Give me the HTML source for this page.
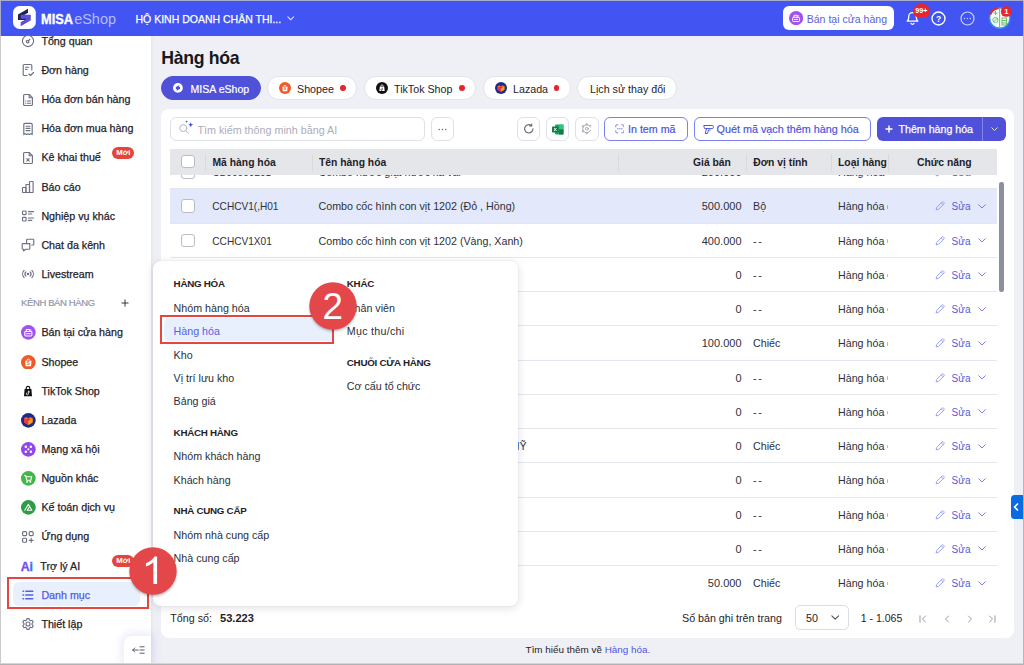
<!DOCTYPE html>
<html><head><meta charset="utf-8">
<style>
*{box-sizing:border-box;margin:0;padding:0}
html,body{width:1024px;height:665px;overflow:hidden;background:#eff0f5;font-family:"Liberation Sans",sans-serif;color:#1f2229;font-size:10.7px}
.abs,.abs *{position:absolute}
div,span,svg{position:absolute;white-space:nowrap}
#hdr{left:0;top:0;width:1024px;height:36px;background:#4255f3}
#side{left:0;top:36px;width:151px;height:629px;background:#fff;box-shadow:1px 0 3px rgba(0,0,0,.05)}
.si{left:41px;font-size:10.7px;color:#1f2229;height:14px;line-height:14px;-webkit-text-stroke:.25px #1f2229}
.pill{top:76px;height:24px;border-radius:12px;background:#fff;border:1px solid #e3e4ea;font-size:10.7px;line-height:22px}
#card{left:161px;top:108.5px;width:853px;height:529px;background:#fff;border-radius:8px}
.btn{top:117px;height:23.5px;border:1px solid #e0e1e8;border-radius:6px;background:#fff}
#th{left:170px;top:149px;width:827px;height:26px;background:#e5e6ea}
.th{top:0;height:26px;line-height:27.4px;font-weight:700;font-size:10.35px;color:#1f2229}
.sep{top:4.5px;width:1px;height:17px;background:#d9dade}
.row{left:170px;width:827px;height:34.25px;border-bottom:1px solid #e3e6ee}
.row span{top:0;height:34.25px;line-height:34.25px;font-size:10.7px;color:#2e3139}
.cb{width:13px;height:13px;border:1px solid #b9bcc6;border-radius:3px;background:#fff}
</style></head><body>
<div id="hdr">
<svg style="left:12.600px;top:5.900px" width="23.4" height="23.2" viewBox="0 0 23.4 23.2"><rect x="0" y="0" width="22.800" height="23" rx="6.500" fill="#fff"/><g transform="translate(11.400,11.500) scale(1.220) translate(-11.750,-11.650)"><path d="M6.5 9.2l8.2-4.7v3.3L9.8 10.6l4.9 0v3.2L6.5 13.800z" fill="#1e2452"/><path d="M17 9.4v4.600l-8.300 4.800v-3.300l4.900-2.800h-4.900l0-3.300z" fill="#5b50d6"/></g></svg>
<svg style="left:40px;top:8px" width="80" height="22" viewBox="0 0 80 22"><text x="1" y="15.8" font-family="Liberation Sans" font-weight="700" font-size="14.6" fill="#fff" stroke="#fff" stroke-width=".35" textLength="32" lengthAdjust="spacingAndGlyphs">MISA</text><text x="34.2" y="15.8" font-family="Liberation Sans" font-size="14.5" fill="#b6bdf9" textLength="41.8" lengthAdjust="spacingAndGlyphs">eShop</text></svg>
<div style="left:135.5px;top:12px;height:14px;line-height:14px;font-size:10.5px;color:#fff;-webkit-text-stroke:.25px #fff">HỘ KINH DOANH CHÂN THI...</div>
<svg style="left:287px;top:16.300px" width="7.500" height="5" viewBox="0 0 9 6" fill="none" stroke="#d5d9fc" stroke-width="1.300" stroke-linecap="round" stroke-linejoin="round"><path d="M1 1l3.500 3.500L8 1"/></svg>
<div style="left:783px;top:6px;width:110.5px;height:24px;border-radius:6px;background:#fff"></div>
<svg style="left:789.100px;top:10.800px" width="14.200" height="14.200" viewBox="0 0 14 14"><circle cx="7" cy="7" r="7" fill="#a052f0"/><g fill="none" stroke="#fff" stroke-width=".9" stroke-linecap="round" stroke-linejoin="round"><rect x="3.6" y="6.2" width="6.8" height="4.2" rx=".8"/><path d="M5 6.2V4.2h3v2M5.2 8.3h3.6M8.6 4.8h1"/></g></svg>
<div style="left:806.7px;top:12.2px;height:14px;line-height:14px;font-size:10.55px;color:#5a5fd8">Bán tại cửa hàng</div>
<svg style="left:904.5px;top:9.600px" width="15" height="15" viewBox="0 0 15 15" fill="none" stroke="#fff" stroke-width="1.3" stroke-linecap="round" stroke-linejoin="round"><path d="M2.2 11.2c1-.9 1.500-2 1.500-3.600V6.500a3.800 3.800 0 0 1 7.600 0v1.100c0 1.600.5 2.700 1.500 3.600z"/><path d="M6 13.300a1.600 1.600 0 0 0 3 0"/></svg>
<div style="left:912.5px;top:4px;width:17.5px;height:14px;border-radius:7px;background:#e8252d;color:#fff;font-size:7.2px;font-weight:700;line-height:14px;text-align:center">99+</div>
<svg style="left:931.4px;top:10.600px" width="15" height="15" viewBox="0 0 15 15"><circle cx="7.5" cy="7.5" r="6.5" fill="none" stroke="#fff" stroke-width="1.400"/><text x="7.500" y="10.600" font-family="Liberation Sans" font-weight="700" font-size="8.500" fill="#fff" text-anchor="middle">?</text></svg>
<svg style="left:960.3px;top:10.600px" width="15" height="15" viewBox="0 0 15 15"><circle cx="7.5" cy="7.5" r="6.5" fill="none" stroke="#cdd2fb" stroke-width="1.200"/><g fill="#cdd2fb"><circle cx="4.600" cy="7.500" r=".7"/><circle cx="7.5" cy="7.5" r=".7"/><circle cx="10.400" cy="7.500" r=".7"/></g></svg>
<svg style="left:987px;top:3.500px" width="28" height="28" viewBox="0 0 28 28"><defs><clipPath id="avc"><circle cx="12.750" cy="14.100" r="10"/></clipPath></defs><circle cx="12.750" cy="14.100" r="10.200" fill="#f3f9f3" stroke="#3d8ef0" stroke-width="1.400"/><g clip-path="url(#avc)" fill="none" stroke="#62b866" stroke-width=".9"><path d="M12.600 4v20"/><circle cx="8.400" cy="16" r="2.600"/><path d="M6.800 17.500l3.200-3"/><path d="M6.500 9h4M8.500 7v4"/><path d="M15 11.500h5M15 9h5"/><rect x="15" y="14" width="4.500" height="7" /><path d="M15 16.500h4.500M15 19h4.500"/></g><path d="M3.300 10.500A10.200 10.200 0 0 1 11.500 4" stroke="#e8252d" stroke-width="2" fill="none"/><circle cx="19.300" cy="7.400" r="5.400" fill="#e8252d"/><text x="19.300" y="10.200" font-family="Liberation Sans" font-weight="700" font-size="7.800" fill="#fff" text-anchor="middle">1</text></svg>
</div>
<div id="side">
<div style="left:12.5px;top:546px;width:127px;height:24px;border-radius:6px;background:#e9f0fd"></div>
<div style="left:21.3px;top:-1.75px;width:14px;height:14px"><svg width="14" height="14" viewBox="0 0 14 14" fill="none" stroke="#6c7184" stroke-width="1.150" stroke-linecap="round" stroke-linejoin="round"><circle cx="7" cy="7" r="5.6"/><circle cx="6.6" cy="7.6" r="1.3"/><path d="M7.6 6.6L9 5.2"/></svg></div>
<div class="si" style="left:41.4px;top:-2.15px;color:#1f2229;-webkit-text-stroke-color:#1f2229">Tổng quan</div>
<div style="left:21.3px;top:27.40px;width:14px;height:14px"><svg width="14" height="14" viewBox="0 0 14 14" fill="none" stroke="#6c7184" stroke-width="1.150" stroke-linecap="round" stroke-linejoin="round"><path d="M6 12.5H3.2a1 1 0 0 1-1-1V2.5a1 1 0 0 1 1-1h6.6a1 1 0 0 1 1 1V7"/><path d="M4.6 4.2h3M4.6 6.4h1.4"/><path d="M8 11l1.5 1.5 3-3"/></svg></div>
<div class="si" style="left:41.4px;top:27.00px;color:#1f2229;-webkit-text-stroke-color:#1f2229">Đơn hàng</div>
<div style="left:21.3px;top:56.55px;width:14px;height:14px"><svg width="14" height="14" viewBox="0 0 14 14" fill="none" stroke="#6c7184" stroke-width="1.150" stroke-linecap="round" stroke-linejoin="round"><path d="M8.2 1.5H3.6a1 1 0 0 0-1 1v9a1 1 0 0 0 1 1h6.8a1 1 0 0 0 1-1V4.7z"/><path d="M8.2 1.5v3.2h3.2"/><path d="M6.5 8h3M6.5 10.2h3M4.7 8h.1M4.7 10.2h.1"/></svg></div>
<div class="si" style="left:41.4px;top:56.15px;color:#1f2229;-webkit-text-stroke-color:#1f2229">Hóa đơn bán hàng</div>
<div style="left:21.3px;top:85.70px;width:14px;height:14px"><svg width="14" height="14" viewBox="0 0 14 14" fill="none" stroke="#6c7184" stroke-width="1.150" stroke-linecap="round" stroke-linejoin="round"><path d="M2.8 12.6V2.4a1 1 0 0 1 1-1h6.4a1 1 0 0 1 1 1v10.2l-1.4-.9-1.4.9-1.4-.9-1.4.9-1.4-.9z"/><path d="M5 4.2h4M5 6.4h4M5 8.6h4"/></svg></div>
<div class="si" style="left:41.4px;top:85.30px;color:#1f2229;-webkit-text-stroke-color:#1f2229">Hóa đơn mua hàng</div>
<div style="left:21.3px;top:114.85px;width:14px;height:14px"><svg width="14" height="14" viewBox="0 0 14 14" fill="none" stroke="#6c7184" stroke-width="1.150" stroke-linecap="round" stroke-linejoin="round"><path d="M8.2 1.5H3.6a1 1 0 0 0-1 1v9a1 1 0 0 0 1 1h6.8a1 1 0 0 0 1-1V4.7z"/><path d="M8.2 1.5v3.2h3.2"/><path d="M5.8 7.6l2.4 2.6M8.2 7.6l-2.4 2.6"/></svg></div>
<div class="si" style="left:41.4px;top:114.45px;color:#1f2229;-webkit-text-stroke-color:#1f2229">Kê khai thuế</div>
<div style="left:21.3px;top:144.00px;width:14px;height:14px"><svg width="14" height="14" viewBox="0 0 14 14" fill="none" stroke="#6c7184" stroke-width="1.150" stroke-linecap="round" stroke-linejoin="round"><rect x="1.5" y="7.5" width="3.4" height="5" rx=".6"/><rect x="4.9" y="4.5" width="3.6" height="8" rx=".6"/><rect x="8.5" y="1.5" width="3.6" height="11" rx=".6"/></svg></div>
<div class="si" style="left:41.4px;top:143.60px;color:#1f2229;-webkit-text-stroke-color:#1f2229">Báo cáo</div>
<div style="left:21.3px;top:173.15px;width:14px;height:14px"><svg width="14" height="14" viewBox="0 0 14 14" fill="none" stroke="#6c7184" stroke-width="1.150" stroke-linecap="round" stroke-linejoin="round"><rect x="1.5" y="2" width="3.6" height="3.6" rx=".8"/><rect x="1.5" y="8.4" width="3.6" height="3.6" rx=".8"/><path d="M7.4 2.6h5.2M7.4 5h3.4M7.4 9h5.2M7.4 11.4h3.4"/></svg></div>
<div class="si" style="left:41.4px;top:172.75px;color:#1f2229;-webkit-text-stroke-color:#1f2229">Nghiệp vụ khác</div>
<div style="left:21.3px;top:202.30px;width:14px;height:14px"><svg width="14" height="14" viewBox="0 0 14 14" fill="none" stroke="#6c7184" stroke-width="1.150" stroke-linecap="round" stroke-linejoin="round"><path d="M5.600 4.600V2a.8.8 0 0 1 .8-.8h5.600a.8.8 0 0 1 .8.800v4.200a.8.8 0 0 1-.8.800h-1.200"/><path d="M8.800 5.600H2a.8.8 0 0 0-.8.800v4a.8.800 0 0 0 .8.800h.6v1.800L4.800 11.200H8a.8.800 0 0 0 .8-.8z"/></svg></div>
<div class="si" style="left:41.4px;top:201.90px;color:#1f2229;-webkit-text-stroke-color:#1f2229">Chat đa kênh</div>
<div style="left:21.3px;top:231.45px;width:14px;height:14px"><svg width="14" height="14" viewBox="0 0 14 14" fill="none" stroke="#6c7184" stroke-width="1.150" stroke-linecap="round" stroke-linejoin="round"><circle cx="7" cy="7" r=".7" fill="#6c7184"/><path d="M4.9 4.9a3 3 0 0 0 0 4.2M9.1 4.9a3 3 0 0 1 0 4.2M3.1 3.4a5.2 5.2 0 0 0 0 7.2M10.9 3.4a5.2 5.2 0 0 1 0 7.2"/></svg></div>
<div class="si" style="left:41.4px;top:231.05px;color:#1f2229;-webkit-text-stroke-color:#1f2229">Livestream</div>
<div style="left:21px;top:260.80px;height:12px;line-height:12px;font-size:9.5px;letter-spacing:-.38px;color:#9296a8;-webkit-text-stroke:.2px #9296a8">KÊNH BÁN HÀNG</div>
<svg style="left:121px;top:262.90px" width="8" height="8" viewBox="0 0 8 8" stroke="#33363f" stroke-width="1" fill="none"><path d="M4 .5v7M.5 4h7"/></svg>
<div style="left:21.3px;top:289.75px;width:14px;height:14px"><svg style="left:-.4px;top:-.3px" width="14.700" height="14.700" viewBox="0 0 14 14"><circle cx="7" cy="7" r="7" fill="#a052f0"/><g fill="none" stroke="#fff" stroke-width="1" stroke-linecap="round" stroke-linejoin="round" stroke-width=".9"><rect x="3.6" y="6.2" width="6.8" height="4.2" rx=".8"/><path d="M5 6.2V4.2h3v2M5.2 8.3h3.6M8.6 4.8h1"/></g></svg></div>
<div class="si" style="left:41.4px;top:289.35px;color:#1f2229;-webkit-text-stroke-color:#1f2229">Bán tại cửa hàng</div>
<div style="left:21.3px;top:318.90px;width:14px;height:14px"><svg style="left:-.4px;top:-.3px" width="14.700" height="14.700" viewBox="0 0 14 14"><circle cx="7" cy="7" r="7" fill="#f05a28"/><path d="M4 5.4h6l-.4 5.4H4.4z" fill="#fff"/><path d="M5.6 5.4a1.4 1.6 0 0 1 2.8 0" fill="none" stroke="#fff" stroke-width=".8"/><text x="7" y="9.8" font-size="4.5" font-weight="700" fill="#f05a28" text-anchor="middle" font-family="Liberation Sans">S</text></svg></div>
<div class="si" style="left:41.4px;top:318.50px;color:#1f2229;-webkit-text-stroke-color:#1f2229">Shopee</div>
<div style="left:21.3px;top:348.05px;width:14px;height:14px"><svg width="14" height="14" viewBox="0 0 14 14"><path d="M3.6 5h6.8l.6 7.2H3z" fill="#111"/><path d="M5.2 5.4V4.2a1.8 1.8 0 0 1 3.6 0v1.2" fill="none" stroke="#111" stroke-width="1.1"/><path d="M7.4 6.8v3a1 1 0 1 1-1-1M7.4 6.8c.2.8.7 1.2 1.4 1.3" fill="none" stroke="#fff" stroke-width=".8"/></svg></div>
<div class="si" style="left:41.4px;top:347.65px;color:#1f2229;-webkit-text-stroke-color:#1f2229">TikTok Shop</div>
<div style="left:21.3px;top:377.20px;width:14px;height:14px"><svg style="left:-.4px;top:-.3px" width="14.700" height="14.700" viewBox="0 0 14 14"><circle cx="7" cy="7" r="7" fill="#1e2a8a"/><path d="M7 11.4L3 9V5l2-1.2 2 1.2 2-1.2L11 5v4z" fill="#f36d21"/><path d="M7 11.4V7.2L3 5v4z" fill="#e8374a"/><path d="M7 11.4V7.2L11 5v4z" fill="#f7a01e"/><path d="M5.6 6.2L7 7.2l1.4-1L7 5.2z" fill="#c2185b"/></svg></div>
<div class="si" style="left:41.4px;top:376.80px;color:#1f2229;-webkit-text-stroke-color:#1f2229">Lazada</div>
<div style="left:21.3px;top:406.35px;width:14px;height:14px"><svg style="left:-.4px;top:-.3px" width="14.700" height="14.700" viewBox="0 0 14 14"><circle cx="7" cy="7" r="7" fill="#9346ec"/><g fill="#fff"><circle cx="4.6" cy="4.6" r="1.2"/><circle cx="9.4" cy="4.6" r="1.2"/><circle cx="4.6" cy="9.4" r="1.2"/><circle cx="9.4" cy="9.4" r="1.2"/><circle cx="7" cy="7" r="1"/></g></svg></div>
<div class="si" style="left:41.4px;top:405.95px;color:#1f2229;-webkit-text-stroke-color:#1f2229">Mạng xã hội</div>
<div style="left:21.3px;top:435.50px;width:14px;height:14px"><svg style="left:-.4px;top:-.3px" width="14.700" height="14.700" viewBox="0 0 14 14"><circle cx="7" cy="7" r="7" fill="#43b549"/><g fill="none" stroke="#fff" stroke-width="1" stroke-linecap="round" stroke-linejoin="round" stroke-width=".9"><path d="M3.4 4.2h1l1 4.6h4l.9-3.4H4.9"/><circle cx="5.9" cy="10.3" r=".5"/><circle cx="8.9" cy="10.3" r=".5"/></g></svg></div>
<div class="si" style="left:41.4px;top:435.10px;color:#1f2229;-webkit-text-stroke-color:#1f2229">Nguồn khác</div>
<div style="left:21.3px;top:464.65px;width:14px;height:14px"><svg style="left:-.4px;top:-.3px" width="14.700" height="14.700" viewBox="0 0 14 14"><circle cx="7" cy="7" r="7" fill="#2e9b47"/><g fill="none" stroke="#fff" stroke-width="1" stroke-linecap="round" stroke-linejoin="round" stroke-width="1.1"><path d="M3.6 9.8L7 4l1.4 2.4M6 9.8l2.2-3.6 2.2 3.6z"/></g></svg></div>
<div class="si" style="left:41.4px;top:464.25px;color:#1f2229;-webkit-text-stroke-color:#1f2229">Kế toán dịch vụ</div>
<div style="left:21.3px;top:493.80px;width:14px;height:14px"><svg width="14" height="14" viewBox="0 0 14 14" fill="none" stroke="#6c7184" stroke-width="1.150" stroke-linecap="round" stroke-linejoin="round"><rect x="1.6" y="1.6" width="4" height="4" rx="1"/><rect x="8.2" y="1.6" width="4" height="4" rx="1"/><rect x="1.6" y="8.2" width="4" height="4" rx="1"/><path d="M10.2 8.4v3.8M8.3 10.3h3.8"/></svg></div>
<div class="si" style="left:41.4px;top:493.40px;color:#1f2229;-webkit-text-stroke-color:#1f2229">Ứng dụng</div>
<div style="left:21.3px;top:522.95px;width:14px;height:14px"><svg width="14" height="14" viewBox="0 0 14 14"><defs><linearGradient id="aig" x1="0" x2="1"><stop offset="0" stop-color="#8a3ff0"/><stop offset="1" stop-color="#3f6cf0"/></linearGradient></defs><text x="-0.3" y="11.6" font-size="12.3" font-weight="700" fill="url(#aig)" stroke="url(#aig)" stroke-width=".3" font-family="Liberation Sans">Ai</text></svg></div>
<div class="si" style="left:40.3px;top:522.55px;color:#1f2229;-webkit-text-stroke-color:#1f2229">Trợ lý AI</div>
<div style="left:21.3px;top:552.10px;width:14px;height:14px"><svg width="14" height="14" viewBox="0 0 14 14" fill="none" stroke="#555ee6" stroke-width="1.400" stroke-linecap="round" stroke-linejoin="round"><path d="M4.8 3.2h7M4.8 7h7M4.8 10.8h7M2 3.2h.6M2 7h.6M2 10.8h.6"/></svg></div>
<div class="si" style="left:41.4px;top:551.70px;color:#525be3;-webkit-text-stroke-color:#525be3">Danh mục</div>
<div style="left:21.3px;top:581.25px;width:14px;height:14px"><svg width="14" height="14" viewBox="0 0 14 14" fill="none" stroke="#6c7184" stroke-width="1.150" stroke-linecap="round" stroke-linejoin="round"><circle cx="7" cy="7" r="2"/><path d="M5.9 1.6h2.2l.4 1.5 1.1.6 1.5-.4 1.1 1.9-1.1 1.1v1.4l1.1 1.1-1.1 1.9-1.5-.4-1.1.6-.4 1.5H5.9l-.4-1.5-1.1-.6-1.5.4-1.1-1.9 1.1-1.1V6.300l-1.1-1.1 1.1-1.9 1.5.4 1.1-.6z"/></svg></div>
<div class="si" style="left:41.4px;top:580.85px;color:#1f2229;-webkit-text-stroke-color:#1f2229">Thiết lập</div>
<div style="left:112.2px;top:111.0px;width:22.2px;height:12px;border-radius:6px;background:#e5443b;color:#fff;font-size:7.8px;font-weight:700;line-height:12px;text-align:center">Mới</div>
<div style="left:112.2px;top:518.6px;width:22.2px;height:12px;border-radius:6px;background:#e5443b;color:#fff;font-size:7.8px;font-weight:700;line-height:12px;text-align:center">Mới</div>
<div style="left:124px;top:600px;width:27px;height:29px;background:#fff;border-radius:8px 0 0 0;box-shadow:0 0 8px 3px rgba(90,100,210,.13)"></div>
<svg style="left:131.5px;top:608.5px" width="13" height="10" viewBox="0 0 13 10" fill="none" stroke="#5a5f6e" stroke-width="1" stroke-linecap="round"><path d="M.8 5h5.4M.8 5l2-2M.8 5l2 2M8 1.8h4.2M8 5h4.2M8 8.200h4.2"/></svg>
</div>
<div style="left:161.2px;top:47.5px;height:20px;line-height:20px;font-size:17.700px;letter-spacing:-.3px;font-weight:700;color:#16181d">Hàng hóa</div>
<div class="pill" style="left:160.5px;width:100px;background:#4f51d9;border-color:#4f51d9;color:#fff;"><svg style="left:11.800px;top:6px" width="9.800" height="9.800" viewBox="0 0 11 11"><circle cx="5.500" cy="5.500" r="5.500" fill="#fff"/><path d="M3.200 4.600L7 2.500v1.500L4.800 5.200h2.200v1.500L3.200 6.700z" fill="#4f51d9"/><path d="M7.900 4.400v2.100L4.100 8.600v-1.500l2.200-1.200H4.100v-1.500z" fill="#4f51d9"/></svg><span style="left:29px;top:.7px;font-size:10.550px;-webkit-text-stroke:.2px #fff">MISA eShop</span></div>
<div class="pill" style="left:267px;width:90px;"><svg style="left:11px;top:5px" width="12" height="12" viewBox="0 0 14 14"><circle cx="7" cy="7" r="7" fill="#f05a28"/><path d="M4 5.400h6l-.4 5.400H4.400z" fill="#fff"/><path d="M5.600 5.400a1.400 1.600 0 0 1 2.800 0" fill="none" stroke="#fff" stroke-width=".8"/><text x="7" y="9.800" font-size="4.500" font-weight="700" fill="#f05a28" text-anchor="middle" font-family="Liberation Sans">S</text></svg><span style="left:29px;top:.7px">Shopee</span><span style="left:72px;top:8px;width:5.6px;height:5.6px;border-radius:3px;background:#e5252b"></span></div>
<div class="pill" style="left:364px;width:112px;"><svg style="left:11px;top:5px" width="12" height="12" viewBox="0 0 14 14"><circle cx="7" cy="7" r="7" fill="#111"/><path d="M4.400 5.600h5.200l.5 5H3.900z" fill="#fff"/><path d="M5.600 5.800V4.800a1.400 1.400 0 0 1 2.800 0v1" fill="none" stroke="#fff" stroke-width=".9"/><path d="M7.300 6.800v2.300a.8.8 0 1 1-.8-.8" fill="none" stroke="#111" stroke-width=".7"/></svg><span style="left:29px;top:.7px">TikTok Shop</span><span style="left:94px;top:8px;width:5.6px;height:5.6px;border-radius:3px;background:#e5252b"></span></div>
<div class="pill" style="left:483px;width:87.5px;"><svg style="left:11px;top:5px" width="12" height="12" viewBox="0 0 14 14"><circle cx="7" cy="7" r="7" fill="#1e2a8a"/><path d="M7 11.400L3 9V5l2-1.200 2 1.200 2-1.200L11 5v4z" fill="#f36d21"/><path d="M7 11.400V7.200L3 5v4z" fill="#e8374a"/><path d="M7 11.400V7.200L11 5v4z" fill="#f7a01e"/><path d="M5.600 6.200L7 7.200l1.400-1L7 5.200z" fill="#c2185b"/></svg><span style="left:29px;top:.7px">Lazada</span><span style="left:69.5px;top:8px;width:5.6px;height:5.6px;border-radius:3px;background:#e5252b"></span></div>
<div class="pill" style="left:577px;width:100px;"><span style="left:12px;top:.7px">Lịch sử thay đổi</span></div>
<div id="card"></div>
<div class="btn" style="left:170px;width:254.5px"></div>
<svg style="left:176px;top:118px" width="20" height="20" viewBox="0 0 20 20" fill="none" stroke="#b3b6c3" stroke-width="1" stroke-linecap="round"><circle cx="7.300" cy="10.100" r="3.500"/><path d="M9.900 12.700l2.700 2.700"/><path d="M14.700 4.300l.7 1.800 1.800.7-1.800.7-.7 1.800-.7-1.800-1.800-.7 1.800-.7z" fill="#4747ea" stroke="none"/><path d="M10.600 2.300l.4 1 .95.350-.95.350-.4 1-.4-1-.95-.35.95-.35z" fill="#4747ea" stroke="none"/></svg>
<div style="left:197.400px;top:122.500px;height:14px;line-height:14px;font-size:10.750px;color:#abaeba">Tìm kiếm thông minh bằng AI</div>
<div class="btn" style="left:430.5px;width:23px"></div><svg style="left:437.5px;top:128px" width="9" height="3" viewBox="0 0 9 3" fill="#6b7080"><circle cx="1.200" cy="1.500" r=".8"/><circle cx="4.500" cy="1.500" r=".8"/><circle cx="7.800" cy="1.500" r=".8"/></svg>
<div class="btn" style="left:517px;width:23px"></div><svg style="left:522.800px;top:123.200px" width="11.600" height="11.600" viewBox="0 0 10 10" fill="none" stroke="#626676" stroke-width=".95" stroke-linecap="round" stroke-linejoin="round"><path d="M8.600 5a3.600 3.600 0 1 1-1.300-2.800"/><path d="M7.500.8v1.700H5.800"/></svg>
<div class="btn" style="left:546px;width:23px"></div><svg style="left:551.500px;top:123.500px" width="12" height="11" viewBox="0 0 12 11"><rect x="3" y=".5" width="8.500" height="10" rx="1" fill="#21a366"/><rect x="7.200" y=".5" width="4.300" height="5" fill="#33c481"/><rect x="7.200" y="5.500" width="4.300" height="5" fill="#107c41"/><rect x="0" y="2.500" width="6.500" height="6" rx=".8" fill="#107c41"/><path d="M2 4l2.500 3M4.500 4L2 7" stroke="#fff" stroke-width=".9"/></svg>
<div class="btn" style="left:575px;width:23.500px"></div><svg style="left:580.800px;top:123.300px" width="11.500" height="11.500" viewBox="0 0 14 14" fill="none" stroke="#9a9eaa" stroke-width="1" stroke-linecap="round" stroke-linejoin="round"><circle cx="7" cy="7" r="1.700"/><path d="M11.600 8.800a4.900 4.900 0 1 1 0-3.600"/><path d="M5.900 2.200l.4-1.300h1.400l.4 1.300M2.500 5l-1.200-.7.700-1.200 1.300.4M2.500 9l-1.200.7.700 1.200 1.300-.4M5.900 11.800l.4 1.300h1.400l.4-1.300M10.600 3.200l1-.8.900 1"/></svg>
<div class="btn" style="left:604px;width:84px;border-color:#7a81ea"></div>
<svg style="left:614.500px;top:124.200px" width="9.600" height="9.600" viewBox="0 0 10 10" fill="none" stroke="#6f77e8" stroke-width=".95" stroke-linecap="round"><path d="M.8 3V1.800a1 1 0 0 1 1-1H3M7 .8h1.200a1 1 0 0 1 1 1V3M9.200 7v1.200a1 1 0 0 1-1 1H7M3 9.200H1.800a1 1 0 0 1-1-1V7M2.500 5h.8M4.600 5h.8M6.700 5h.8"/></svg>
<div style="left:628px;top:122.400px;height:14px;line-height:14px;font-size:10.700px;-webkit-text-stroke:.2px #4b55e0;color:#4b55e0">In tem mã</div>
<div class="btn" style="left:693.500px;width:177.500px;border-color:#7a81ea"></div>
<svg style="left:703px;top:123.500px" width="11" height="11" viewBox="0 0 11 11" fill="none" stroke="#4b55e0" stroke-width="1" stroke-linecap="round" stroke-linejoin="round"><path d="M1.200 1.500h8.300a.8.8 0 0 1 .8.800v1.500a.8.8 0 0 1-.8.800H2a.8.8 0 0 1-.8-.8z"/><path d="M3.500 4.600L2.200 9.500h2.300l1-3.500h1.500"/></svg>
<div style="left:716.500px;top:122.400px;height:14px;line-height:14px;font-size:10.800px;-webkit-text-stroke:.2px #4b55e0;color:#4b55e0">Quét mã vạch thêm hàng hóa</div>
<div style="left:877px;top:117px;width:129px;height:23.500px;border-radius:6px;background:#4f51d9"></div>
<div style="left:982px;top:117px;width:1px;height:23.500px;background:#7f85e6"></div>
<svg style="left:884.500px;top:125px" width="8" height="8" viewBox="0 0 8 8" stroke="#fff" stroke-width="1.450" fill="none"><path d="M4 .5v7M.5 4h7"/></svg>
<div style="left:898.500px;top:122px;height:14px;line-height:14px;font-size:10.650px;color:#fff;-webkit-text-stroke:.25px #fff">Thêm hàng hóa</div>
<svg style="left:990.500px;top:127px" width="7" height="5" viewBox="0 0 7 5" fill="none" stroke="#dfe2fc" stroke-width="1" stroke-linecap="round" stroke-linejoin="round"><path d="M.8.8l2.700 2.700L6.200.8"/></svg>
<div style="left:170px;top:175px;width:827px;height:426px;overflow:hidden">
<div class="row" style="left:0;top:-19.80px;height:34.250px;">
<span class="cb" style="left:11px;top:10px;width:13.500px;height:13.500px"></span>
<span style="left:42.300px;top:1px;font-size:10.100px">CB00000201</span><span style="left:148.500px">Combo nước giặt nước xả vải</span>
<span style="right:255.500px;left:auto;font-size:11px">200.000</span><span style="left:583px"></span>
<span style="left:668px">Hàng hóa</span><span style="left:716.800px;top:15.600px;width:1.300px;height:3.600px;border-radius:1px;background:#6d707a;opacity:.5"></span>
<svg style="left:765.300px;top:11.900px" width="10" height="10" viewBox="0 0 9 9" fill="none" stroke="#8f96ec" stroke-width=".8" stroke-linejoin="round"><path d="M1 8l.5-2.200L6.300 1a.9.9 0 0 1 1.300 0l.4.400a.9.9 0 0 1 0 1.300L3.200 7.500z"/><path d="M5.600 1.700l1.700 1.700"/></svg><span style="left:781.600px;top:1px;color:#565cda;font-size:10px">Sửa</span><svg style="left:807.900px;top:14.400px" width="8" height="5" viewBox="0 0 8 5" fill="none" stroke="#6b72e4" stroke-width=".9" stroke-linecap="round" stroke-linejoin="round"><path d="M.7.700l3.300 3.300L7.300.7"/></svg>
</div>
<div class="row" style="left:0;top:14.45px;height:34.250px;background:#e3e9fb;">
<span class="cb" style="left:11px;top:10px;width:13.500px;height:13.500px"></span>
<span style="left:42.300px;top:1px;font-size:10.100px">CCHCV1(,H01</span><span style="left:148.500px">Combo cốc hình con vịt 1202 (Đỏ , Hồng)</span>
<span style="right:255.500px;left:auto;font-size:11px">500.000</span><span style="left:583px">Bộ</span>
<span style="left:668px">Hàng hóa</span><span style="left:716.800px;top:15.600px;width:1.300px;height:3.600px;border-radius:1px;background:#6d707a;opacity:.5"></span>
<svg style="left:765.300px;top:11.900px" width="10" height="10" viewBox="0 0 9 9" fill="none" stroke="#8f96ec" stroke-width=".8" stroke-linejoin="round"><path d="M1 8l.5-2.200L6.300 1a.9.9 0 0 1 1.300 0l.4.400a.9.9 0 0 1 0 1.300L3.200 7.500z"/><path d="M5.600 1.700l1.700 1.700"/></svg><span style="left:781.600px;top:1px;color:#565cda;font-size:10px">Sửa</span><svg style="left:807.900px;top:14.400px" width="8" height="5" viewBox="0 0 8 5" fill="none" stroke="#6b72e4" stroke-width=".9" stroke-linecap="round" stroke-linejoin="round"><path d="M.7.700l3.300 3.300L7.300.7"/></svg>
</div>
<div class="row" style="left:0;top:48.70px;height:34.250px;">
<span class="cb" style="left:11px;top:10px;width:13.500px;height:13.500px"></span>
<span style="left:42.300px;top:1px;font-size:10.100px">CCHCV1X01</span><span style="left:148.500px">Combo cốc hình con vịt 1202 (Vàng, Xanh)</span>
<span style="right:255.500px;left:auto;font-size:11px">400.000</span><span style="left:583px;letter-spacing:1.600px">--</span>
<span style="left:668px">Hàng hóa</span><span style="left:716.800px;top:15.600px;width:1.300px;height:3.600px;border-radius:1px;background:#6d707a;opacity:.5"></span>
<svg style="left:765.300px;top:11.900px" width="10" height="10" viewBox="0 0 9 9" fill="none" stroke="#8f96ec" stroke-width=".8" stroke-linejoin="round"><path d="M1 8l.5-2.200L6.300 1a.9.9 0 0 1 1.300 0l.4.400a.9.9 0 0 1 0 1.300L3.200 7.500z"/><path d="M5.600 1.700l1.700 1.700"/></svg><span style="left:781.600px;top:1px;color:#565cda;font-size:10px">Sửa</span><svg style="left:807.900px;top:14.400px" width="8" height="5" viewBox="0 0 8 5" fill="none" stroke="#6b72e4" stroke-width=".9" stroke-linecap="round" stroke-linejoin="round"><path d="M.7.700l3.300 3.300L7.300.7"/></svg>
</div>
<div class="row" style="left:0;top:82.95px;height:34.250px;">
<span class="cb" style="left:11px;top:10px;width:13.500px;height:13.500px"></span>
<span style="left:42.300px;top:1px;font-size:10.100px"></span><span style="left:148.500px"></span>
<span style="right:255.500px;left:auto;font-size:11px">0</span><span style="left:583px;letter-spacing:1.600px">--</span>
<span style="left:668px">Hàng hóa</span><span style="left:716.800px;top:15.600px;width:1.300px;height:3.600px;border-radius:1px;background:#6d707a;opacity:.5"></span>
<svg style="left:765.300px;top:11.900px" width="10" height="10" viewBox="0 0 9 9" fill="none" stroke="#8f96ec" stroke-width=".8" stroke-linejoin="round"><path d="M1 8l.5-2.200L6.300 1a.9.9 0 0 1 1.300 0l.4.400a.9.9 0 0 1 0 1.300L3.200 7.500z"/><path d="M5.600 1.700l1.700 1.700"/></svg><span style="left:781.600px;top:1px;color:#565cda;font-size:10px">Sửa</span><svg style="left:807.900px;top:14.400px" width="8" height="5" viewBox="0 0 8 5" fill="none" stroke="#6b72e4" stroke-width=".9" stroke-linecap="round" stroke-linejoin="round"><path d="M.7.700l3.300 3.300L7.300.7"/></svg>
</div>
<div class="row" style="left:0;top:117.20px;height:34.250px;">
<span class="cb" style="left:11px;top:10px;width:13.500px;height:13.500px"></span>
<span style="left:42.300px;top:1px;font-size:10.100px"></span><span style="left:148.500px"></span>
<span style="right:255.500px;left:auto;font-size:11px">0</span><span style="left:583px;letter-spacing:1.600px">--</span>
<span style="left:668px">Hàng hóa</span><span style="left:716.800px;top:15.600px;width:1.300px;height:3.600px;border-radius:1px;background:#6d707a;opacity:.5"></span>
<svg style="left:765.300px;top:11.900px" width="10" height="10" viewBox="0 0 9 9" fill="none" stroke="#8f96ec" stroke-width=".8" stroke-linejoin="round"><path d="M1 8l.5-2.200L6.300 1a.9.9 0 0 1 1.300 0l.4.400a.9.9 0 0 1 0 1.300L3.200 7.500z"/><path d="M5.600 1.700l1.700 1.700"/></svg><span style="left:781.600px;top:1px;color:#565cda;font-size:10px">Sửa</span><svg style="left:807.900px;top:14.400px" width="8" height="5" viewBox="0 0 8 5" fill="none" stroke="#6b72e4" stroke-width=".9" stroke-linecap="round" stroke-linejoin="round"><path d="M.7.700l3.300 3.300L7.300.7"/></svg>
</div>
<div class="row" style="left:0;top:151.45px;height:34.250px;">
<span class="cb" style="left:11px;top:10px;width:13.500px;height:13.500px"></span>
<span style="left:42.300px;top:1px;font-size:10.100px"></span><span style="left:148.500px"></span>
<span style="right:255.500px;left:auto;font-size:11px">100.000</span><span style="left:583px">Chiếc</span>
<span style="left:668px">Hàng hóa</span><span style="left:716.800px;top:15.600px;width:1.300px;height:3.600px;border-radius:1px;background:#6d707a;opacity:.5"></span>
<svg style="left:765.300px;top:11.900px" width="10" height="10" viewBox="0 0 9 9" fill="none" stroke="#8f96ec" stroke-width=".8" stroke-linejoin="round"><path d="M1 8l.5-2.200L6.300 1a.9.9 0 0 1 1.300 0l.4.400a.9.9 0 0 1 0 1.300L3.200 7.500z"/><path d="M5.600 1.700l1.700 1.700"/></svg><span style="left:781.600px;top:1px;color:#565cda;font-size:10px">Sửa</span><svg style="left:807.900px;top:14.400px" width="8" height="5" viewBox="0 0 8 5" fill="none" stroke="#6b72e4" stroke-width=".9" stroke-linecap="round" stroke-linejoin="round"><path d="M.7.700l3.300 3.300L7.300.7"/></svg>
</div>
<div class="row" style="left:0;top:185.70px;height:34.250px;">
<span class="cb" style="left:11px;top:10px;width:13.500px;height:13.500px"></span>
<span style="left:42.300px;top:1px;font-size:10.100px"></span><span style="left:148.500px"></span>
<span style="right:255.500px;left:auto;font-size:11px">0</span><span style="left:583px;letter-spacing:1.600px">--</span>
<span style="left:668px">Hàng hóa</span><span style="left:716.800px;top:15.600px;width:1.300px;height:3.600px;border-radius:1px;background:#6d707a;opacity:.5"></span>
<svg style="left:765.300px;top:11.900px" width="10" height="10" viewBox="0 0 9 9" fill="none" stroke="#8f96ec" stroke-width=".8" stroke-linejoin="round"><path d="M1 8l.5-2.200L6.300 1a.9.9 0 0 1 1.300 0l.4.400a.9.9 0 0 1 0 1.300L3.200 7.500z"/><path d="M5.600 1.700l1.700 1.700"/></svg><span style="left:781.600px;top:1px;color:#565cda;font-size:10px">Sửa</span><svg style="left:807.900px;top:14.400px" width="8" height="5" viewBox="0 0 8 5" fill="none" stroke="#6b72e4" stroke-width=".9" stroke-linecap="round" stroke-linejoin="round"><path d="M.7.700l3.300 3.300L7.300.7"/></svg>
</div>
<div class="row" style="left:0;top:219.95px;height:34.250px;">
<span class="cb" style="left:11px;top:10px;width:13.500px;height:13.500px"></span>
<span style="left:42.300px;top:1px;font-size:10.100px"></span><span style="left:148.500px"></span>
<span style="right:255.500px;left:auto;font-size:11px">0</span><span style="left:583px;letter-spacing:1.600px">--</span>
<span style="left:668px">Hàng hóa</span><span style="left:716.800px;top:15.600px;width:1.300px;height:3.600px;border-radius:1px;background:#6d707a;opacity:.5"></span>
<svg style="left:765.300px;top:11.900px" width="10" height="10" viewBox="0 0 9 9" fill="none" stroke="#8f96ec" stroke-width=".8" stroke-linejoin="round"><path d="M1 8l.5-2.200L6.300 1a.9.9 0 0 1 1.300 0l.4.400a.9.9 0 0 1 0 1.300L3.200 7.500z"/><path d="M5.600 1.700l1.700 1.700"/></svg><span style="left:781.600px;top:1px;color:#565cda;font-size:10px">Sửa</span><svg style="left:807.900px;top:14.400px" width="8" height="5" viewBox="0 0 8 5" fill="none" stroke="#6b72e4" stroke-width=".9" stroke-linecap="round" stroke-linejoin="round"><path d="M.7.700l3.300 3.300L7.300.7"/></svg>
</div>
<div class="row" style="left:0;top:254.20px;height:34.250px;">
<span class="cb" style="left:11px;top:10px;width:13.500px;height:13.500px"></span>
<span style="left:340.600px">MỸ</span>
<span style="left:42.300px;top:1px;font-size:10.100px"></span><span style="left:148.500px"></span>
<span style="right:255.500px;left:auto;font-size:11px">0</span><span style="left:583px">Chiếc</span>
<span style="left:668px">Hàng hóa</span><span style="left:716.800px;top:15.600px;width:1.300px;height:3.600px;border-radius:1px;background:#6d707a;opacity:.5"></span>
<svg style="left:765.300px;top:11.900px" width="10" height="10" viewBox="0 0 9 9" fill="none" stroke="#8f96ec" stroke-width=".8" stroke-linejoin="round"><path d="M1 8l.5-2.200L6.300 1a.9.9 0 0 1 1.300 0l.4.400a.9.9 0 0 1 0 1.300L3.200 7.500z"/><path d="M5.600 1.700l1.700 1.700"/></svg><span style="left:781.600px;top:1px;color:#565cda;font-size:10px">Sửa</span><svg style="left:807.900px;top:14.400px" width="8" height="5" viewBox="0 0 8 5" fill="none" stroke="#6b72e4" stroke-width=".9" stroke-linecap="round" stroke-linejoin="round"><path d="M.7.700l3.300 3.300L7.300.7"/></svg>
</div>
<div class="row" style="left:0;top:288.45px;height:34.250px;">
<span class="cb" style="left:11px;top:10px;width:13.500px;height:13.500px"></span>
<span style="left:42.300px;top:1px;font-size:10.100px"></span><span style="left:148.500px"></span>
<span style="right:255.500px;left:auto;font-size:11px">0</span><span style="left:583px;letter-spacing:1.600px">--</span>
<span style="left:668px">Hàng hóa</span><span style="left:716.800px;top:15.600px;width:1.300px;height:3.600px;border-radius:1px;background:#6d707a;opacity:.5"></span>
<svg style="left:765.300px;top:11.900px" width="10" height="10" viewBox="0 0 9 9" fill="none" stroke="#8f96ec" stroke-width=".8" stroke-linejoin="round"><path d="M1 8l.5-2.200L6.300 1a.9.9 0 0 1 1.300 0l.4.400a.9.9 0 0 1 0 1.300L3.200 7.500z"/><path d="M5.600 1.700l1.700 1.700"/></svg><span style="left:781.600px;top:1px;color:#565cda;font-size:10px">Sửa</span><svg style="left:807.900px;top:14.400px" width="8" height="5" viewBox="0 0 8 5" fill="none" stroke="#6b72e4" stroke-width=".9" stroke-linecap="round" stroke-linejoin="round"><path d="M.7.700l3.300 3.300L7.300.7"/></svg>
</div>
<div class="row" style="left:0;top:322.70px;height:34.250px;">
<span class="cb" style="left:11px;top:10px;width:13.500px;height:13.500px"></span>
<span style="left:42.300px;top:1px;font-size:10.100px"></span><span style="left:148.500px"></span>
<span style="right:255.500px;left:auto;font-size:11px">0</span><span style="left:583px;letter-spacing:1.600px">--</span>
<span style="left:668px">Hàng hóa</span><span style="left:716.800px;top:15.600px;width:1.300px;height:3.600px;border-radius:1px;background:#6d707a;opacity:.5"></span>
<svg style="left:765.300px;top:11.900px" width="10" height="10" viewBox="0 0 9 9" fill="none" stroke="#8f96ec" stroke-width=".8" stroke-linejoin="round"><path d="M1 8l.5-2.200L6.300 1a.9.9 0 0 1 1.300 0l.4.400a.9.9 0 0 1 0 1.300L3.200 7.500z"/><path d="M5.600 1.700l1.700 1.700"/></svg><span style="left:781.600px;top:1px;color:#565cda;font-size:10px">Sửa</span><svg style="left:807.900px;top:14.400px" width="8" height="5" viewBox="0 0 8 5" fill="none" stroke="#6b72e4" stroke-width=".9" stroke-linecap="round" stroke-linejoin="round"><path d="M.7.700l3.300 3.300L7.300.7"/></svg>
</div>
<div class="row" style="left:0;top:356.95px;height:34.250px;">
<span class="cb" style="left:11px;top:10px;width:13.500px;height:13.500px"></span>
<span style="left:42.300px;top:1px;font-size:10.100px"></span><span style="left:148.500px"></span>
<span style="right:255.500px;left:auto;font-size:11px">0</span><span style="left:583px;letter-spacing:1.600px">--</span>
<span style="left:668px">Hàng hóa</span><span style="left:716.800px;top:15.600px;width:1.300px;height:3.600px;border-radius:1px;background:#6d707a;opacity:.5"></span>
<svg style="left:765.300px;top:11.900px" width="10" height="10" viewBox="0 0 9 9" fill="none" stroke="#8f96ec" stroke-width=".8" stroke-linejoin="round"><path d="M1 8l.5-2.200L6.300 1a.9.9 0 0 1 1.300 0l.4.400a.9.9 0 0 1 0 1.300L3.200 7.500z"/><path d="M5.600 1.700l1.700 1.700"/></svg><span style="left:781.600px;top:1px;color:#565cda;font-size:10px">Sửa</span><svg style="left:807.900px;top:14.400px" width="8" height="5" viewBox="0 0 8 5" fill="none" stroke="#6b72e4" stroke-width=".9" stroke-linecap="round" stroke-linejoin="round"><path d="M.7.700l3.300 3.300L7.300.7"/></svg>
</div>
<div class="row" style="left:0;top:391.20px;height:34.250px;border-bottom:0;">
<span class="cb" style="left:11px;top:10px;width:13.500px;height:13.500px"></span>
<span style="left:42.300px;top:1px;font-size:10.100px"></span><span style="left:148.500px"></span>
<span style="right:255.500px;left:auto;font-size:11px">50.000</span><span style="left:583px">Chiếc</span>
<span style="left:668px">Hàng hóa</span><span style="left:716.800px;top:15.600px;width:1.300px;height:3.600px;border-radius:1px;background:#6d707a;opacity:.5"></span>
<svg style="left:765.300px;top:11.900px" width="10" height="10" viewBox="0 0 9 9" fill="none" stroke="#8f96ec" stroke-width=".8" stroke-linejoin="round"><path d="M1 8l.5-2.200L6.300 1a.9.9 0 0 1 1.300 0l.4.400a.9.9 0 0 1 0 1.300L3.200 7.500z"/><path d="M5.600 1.700l1.700 1.700"/></svg><span style="left:781.600px;top:1px;color:#565cda;font-size:10px">Sửa</span><svg style="left:807.900px;top:14.400px" width="8" height="5" viewBox="0 0 8 5" fill="none" stroke="#6b72e4" stroke-width=".9" stroke-linecap="round" stroke-linejoin="round"><path d="M.7.700l3.300 3.300L7.300.7"/></svg>
</div>
</div>
<div id="th">
<span class="cb" style="left:11px;top:6px;width:13.500px"></span>
<span class="sep" style="left:35px"></span>
<span class="sep" style="left:142px"></span>
<span class="sep" style="left:448px"></span>
<span class="sep" style="left:576px"></span>
<span class="sep" style="left:661px"></span>
<span class="sep" style="left:718px"></span>
<span class="th" style="left:42.500px">Mã hàng hóa</span><span class="th" style="left:149px">Tên hàng hóa</span>
<span class="th" style="left:523px">Giá bán</span><span class="th" style="left:583.200px">Đơn vị tính</span><span class="th" style="left:668px">Loại hàng</span><span class="th" style="left:747px">Chức năng</span>
</div>
<div style="left:999.200px;top:182px;width:4.400px;height:110px;border-radius:2.200px;background:#8c909e"></div>
<div style="left:170.300px;top:611px;height:14px;line-height:14px;font-size:10.700px">Tổng số:</div>
<div style="left:220px;top:611px;height:14px;line-height:14px;font-size:11.100px;font-weight:700">53.223</div>
<div style="left:682px;top:611px;height:14px;line-height:14px;font-size:10.700px">Số bản ghi trên trang</div>
<div style="left:795px;top:605px;width:54px;height:25px;border:1px solid #dcdde3;border-radius:5px;background:#fff"></div>
<div style="left:806px;top:611px;height:14px;line-height:14px;font-size:10.700px">50</div>
<svg style="left:830.800px;top:615.300px" width="8.400" height="6" viewBox="0 0 7 5" fill="none" stroke="#4a4f5e" stroke-width=".9" stroke-linecap="round" stroke-linejoin="round"><path d="M.7.700l2.800 2.800L6.300.7"/></svg>
<div style="left:860.800px;top:611px;height:14px;line-height:14px;font-size:10.500px">1 - 1.065</div>
<svg style="left:919px;top:614.500px" width="8" height="8" viewBox="0 0 8 8" fill="none" stroke="#8a8e9c" stroke-width=".9" stroke-linecap="round" stroke-linejoin="round"><path d="M1 .8v6.400M6.500 1L3.500 4l3 3"/></svg>
<svg style="left:943px;top:614.500px" width="8" height="8" viewBox="0 0 8 8" fill="none" stroke="#8a8e9c" stroke-width=".9" stroke-linecap="round" stroke-linejoin="round"><path d="M5.500 1L2.500 4l3 3"/></svg>
<svg style="left:966px;top:614.500px" width="8" height="8" viewBox="0 0 8 8" fill="none" stroke="#8a8e9c" stroke-width=".9" stroke-linecap="round" stroke-linejoin="round"><path d="M2.500 1l3 3-3 3"/></svg>
<svg style="left:988px;top:614.500px" width="8" height="8" viewBox="0 0 8 8" fill="none" stroke="#8a8e9c" stroke-width=".9" stroke-linecap="round" stroke-linejoin="round"><path d="M7 .8v6.400M1.500 1l3 3-3 3"/></svg>
<div style="left:525.600px;top:644px;height:12px;line-height:12px;font-size:9.900px;color:#1f2229">Tìm hiểu thêm về <span style="position:static;color:#4b55e0">Hàng hóa.</span></div>
<div style="left:1011px;top:495px;width:13px;height:24px;border-radius:3.500px 0 0 3.500px;background:#0b6ce2"></div>
<svg style="left:1013.300px;top:502.800px" width="6" height="8" viewBox="0 0 6 8" fill="none" stroke="#fff" stroke-width="1.700" stroke-linecap="round" stroke-linejoin="round"><path d="M4.500 1L1.500 4l3 3"/></svg>
<div style="left:153px;top:260.500px;width:365px;height:345.500px;border-radius:8px;background:#fff;box-shadow:0 2px 10px rgba(20,25,60,.13),0 0 2px rgba(20,25,60,.08)"></div>
<div style="left:164.300px;top:317.800px;width:170px;height:23.600px;border-radius:5px 0 0 5px;background:#e9f0fd"></div>
<div style="left:173.6px;top:277.30px;height:14px;line-height:14px;font-size:9.800px;letter-spacing:-.28px;font-weight:700;color:#1f2229">HÀNG HÓA</div>
<div style="left:173.6px;top:300.80px;height:14px;line-height:14px;font-size:10.700px;color:#2b2f39">Nhóm hàng hóa</div>
<div style="left:173.6px;top:324.20px;height:14px;line-height:14px;font-size:10.700px;color:#5560e5">Hàng hóa</div>
<div style="left:173.6px;top:347.50px;height:14px;line-height:14px;font-size:10.700px;color:#2b2f39">Kho</div>
<div style="left:173.6px;top:370.70px;height:14px;line-height:14px;font-size:10.700px;color:#2b2f39">Vị trí lưu kho</div>
<div style="left:173.6px;top:394.20px;height:14px;line-height:14px;font-size:10.700px;color:#2b2f39">Bảng giá</div>
<div style="left:173.6px;top:425.60px;height:14px;line-height:14px;font-size:9.800px;letter-spacing:-.28px;font-weight:700;color:#1f2229">KHÁCH HÀNG</div>
<div style="left:173.6px;top:449.20px;height:14px;line-height:14px;font-size:10.700px;color:#2b2f39">Nhóm khách hàng</div>
<div style="left:173.6px;top:472.50px;height:14px;line-height:14px;font-size:10.700px;color:#2b2f39">Khách hàng</div>
<div style="left:173.6px;top:504.30px;height:14px;line-height:14px;font-size:9.800px;letter-spacing:-.28px;font-weight:700;color:#1f2229">NHÀ CUNG CẤP</div>
<div style="left:173.6px;top:527.90px;height:14px;line-height:14px;font-size:10.700px;color:#2b2f39">Nhóm nhà cung cấp</div>
<div style="left:173.6px;top:551.20px;height:14px;line-height:14px;font-size:10.700px;color:#2b2f39">Nhà cung cấp</div>
<div style="left:346.8px;top:277.30px;height:14px;line-height:14px;font-size:9.800px;letter-spacing:-.28px;font-weight:700;color:#1f2229">KHÁC</div>
<div style="left:346.8px;top:300.80px;height:14px;line-height:14px;font-size:10.700px;color:#2b2f39">Nhân viên</div>
<div style="left:346.8px;top:324.20px;height:14px;line-height:14px;font-size:10.700px;color:#2b2f39"><span style="position:static;letter-spacing:.27px">Mục thu/chi</span></div>
<div style="left:346.8px;top:355.80px;height:14px;line-height:14px;font-size:9.800px;letter-spacing:-.28px;font-weight:700;color:#1f2229">CHUỖI CỬA HÀNG</div>
<div style="left:346.8px;top:379.30px;height:14px;line-height:14px;font-size:10.700px;color:#2b2f39">Cơ cấu tổ chức</div>
<div style="left:160.400px;top:314.800px;width:173.600px;height:29.400px;border:2px solid #e5463f"></div>
<div style="left:6.700px;top:577px;width:142.300px;height:32px;border:2px solid #e5463f"></div>
<svg style="left:302.60px;top:276.00px" width="60" height="64" viewBox="0 0 60 64"><defs><filter id="sh2" x="-30%" y="-30%" width="160%" height="170%"><feGaussianBlur stdDeviation="1.800"/></filter></defs><circle cx="30" cy="32" r="23" fill="#000" opacity=".35" filter="url(#sh2)"/><circle cx="30" cy="30" r="23.700" fill="#e4474a"/><text x="29.800" y="43.200" font-family="Liberation Sans" font-size="36.800" fill="#fff" text-anchor="middle">2</text></svg>
<svg style="left:122.90px;top:541.00px" width="60" height="64" viewBox="0 0 60 64"><defs><filter id="sh1" x="-30%" y="-30%" width="160%" height="170%"><feGaussianBlur stdDeviation="1.800"/></filter></defs><circle cx="30" cy="32" r="23" fill="#000" opacity=".35" filter="url(#sh1)"/><circle cx="30" cy="30" r="23.700" fill="#e4474a"/><path d="M34.100 15.400V43.100h-3.700V21.300c-1.900 1.800-4.600 3.300-7.500 4.300v-3.300c3.700-1.500 6.900-4 8.700-6.900z" fill="#fff"/></svg>
<div style="left:0;top:0;width:1024px;height:1px;background:rgba(192,192,192,.82)"></div>
<div style="left:0;top:1px;width:1px;height:664px;background:rgba(192,192,192,.82)"></div>
<div style="left:0;top:663px;width:1024px;height:1px;background:#d4d4d8"></div><div style="left:0;top:664px;width:1024px;height:1px;background:#b2b2b5"></div>
<div style="left:1023px;top:0;width:1px;height:665px;background:#b6b6ba"></div>
</body></html>
